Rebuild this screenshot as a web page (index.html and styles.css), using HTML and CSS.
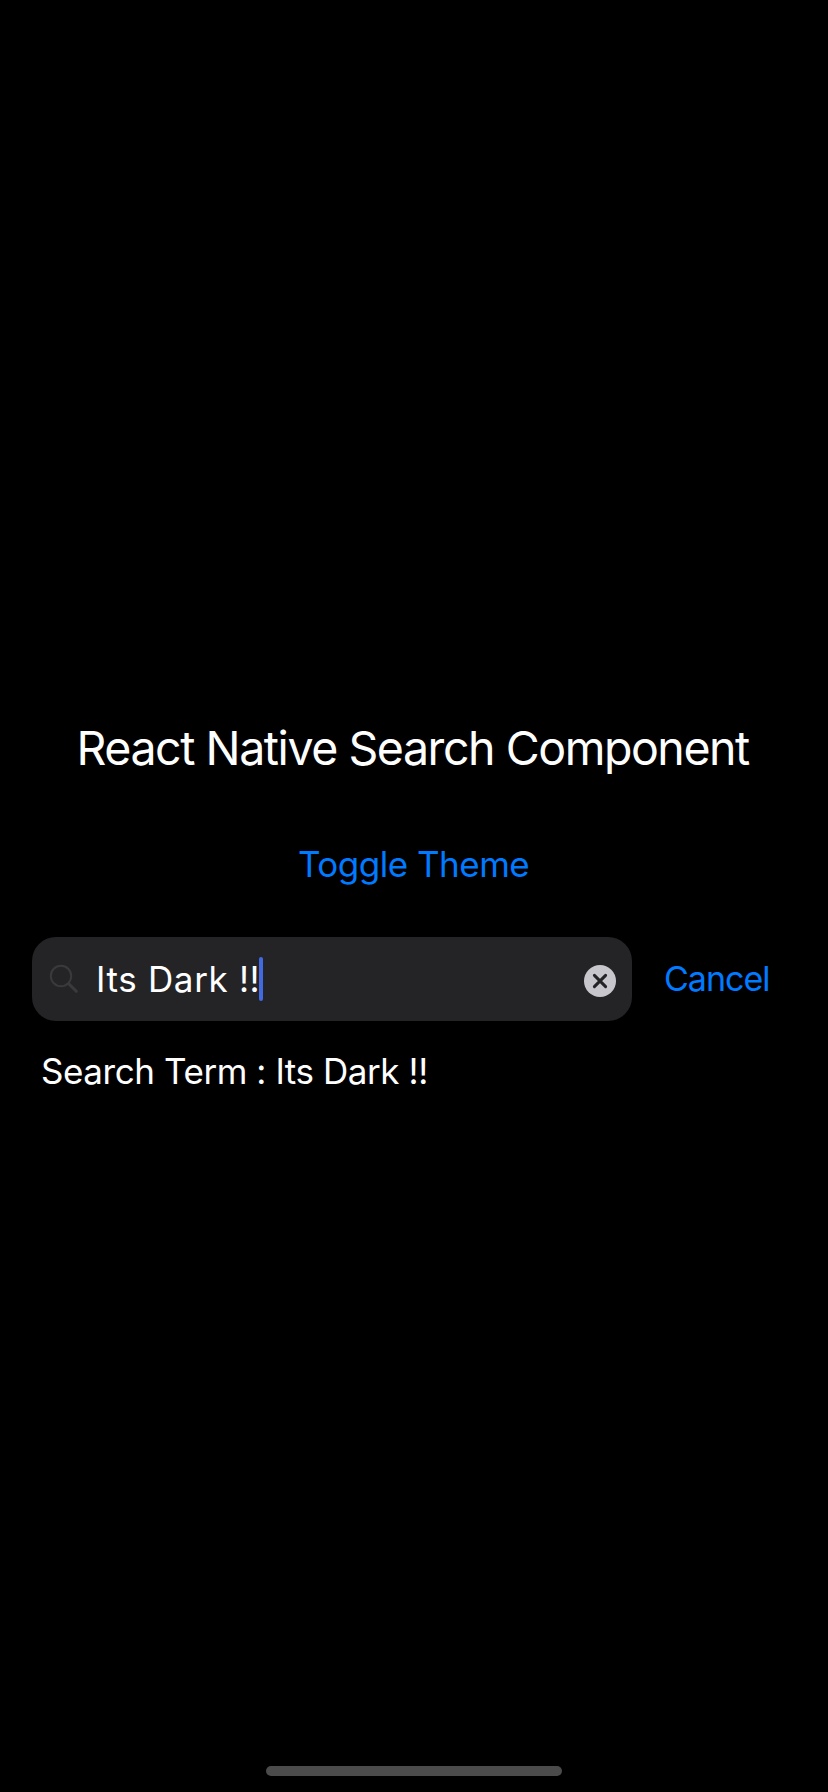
FILE: index.html
```html
<!DOCTYPE html>
<html lang="en">
<head>
<meta charset="utf-8">
<title>React Native Search Component</title>
<link rel="stylesheet" href="styles.css">
</head>
<body>
<main class="screen">
  <h1 class="title">React Native Search Component</h1>
  <button class="toggle" type="button">Toggle Theme</button>
  <div class="search-row">
    <div class="search-box">
      <svg class="search-icon" viewBox="0 0 30 30" fill="none" stroke="#3a3a3c" stroke-linecap="round">
        <circle cx="12" cy="12" r="10.2" stroke-width="2"/>
        <path d="M19.7 19.7L27.3 27.3" stroke-width="3"/>
      </svg>
      <span class="query">Its Dark !!</span>
      <span class="caret"></span>
      <svg class="clear" viewBox="0 0 32 32">
        <circle cx="16" cy="16" r="16" fill="#c7c7cc"/>
        <path d="M10.4 10.4L21.6 21.6M21.6 10.4L10.4 21.6" stroke="#242426" stroke-width="3" stroke-linecap="round"/>
      </svg>
    </div>
    <button class="cancel" type="button">Cancel</button>
  </div>
  <p class="term">Search Term : Its Dark !!</p>
  <div class="home-bar"></div>
</main>
</body>
</html>
```
FILE: styles.css
```css
* { box-sizing: border-box; }
body { margin: 0; background: #000; }
.screen {
  display: flex;
  flex-direction: column;
  height: 1792px;
  padding: 718px 32px 16px;
  color: #fff;
  font-family: Inter, "Liberation Sans", sans-serif;
}
.title {
  margin: 0 0 64px;
  padding-left: 44.5px;
  font-size: 46.5px;
  font-weight: 400;
  line-height: 60px;
  letter-spacing: -1.45px;
  white-space: nowrap;
}
.toggle, .cancel {
  padding: 0;
  border: 0;
  background: none;
  color: #007aff;
  font: 400 35px/44px Inter, "Liberation Sans", sans-serif;
  white-space: nowrap;
}
.toggle { align-self: flex-start; margin: 0 0 51px 266px; letter-spacing: -0.5px; }
.search-row { display: flex; align-items: center; height: 84px; }
.search-box {
  display: flex;
  align-items: center;
  width: 600px;
  height: 84px;
  padding: 0 16px;
  border-radius: 24px;
  background: #242426;
}
.search-icon { width: 30px; height: 30px; margin: 0 17px 0 1px; }
.query { width: 163px; font-size: 35px; line-height: 44px; letter-spacing: 0.65px; white-space: nowrap; }
.caret { width: 4px; height: 44px; border-radius: 2px; background: #4169e1; }
.clear { width: 32px; height: 32px; margin: 4px 0 0 auto; }
.cancel { margin-left: 32px; font-size: 34px; letter-spacing: -1px; }
.term { margin: 28px 0 0 9px; font-size: 35px; line-height: 44px; letter-spacing: -0.43px; white-space: nowrap; }
.home-bar { align-self: center; width: 296px; height: 10px; margin-top: auto; border-radius: 5px; background: #4b4b4b; }
```
